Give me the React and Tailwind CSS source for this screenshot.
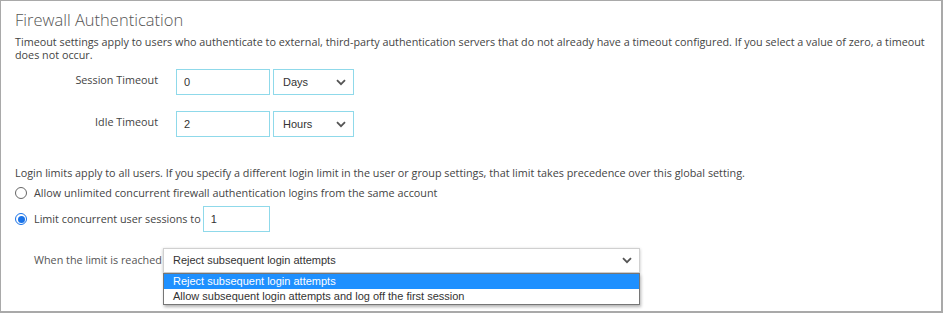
import React from 'react';

const Chevron = () => (
  <svg width="10" height="7" viewBox="0 0 10 7" className="shrink-0">
    <path d="M1 1.2 L5 5.2 L9 1.2" fill="none" stroke="#555" strokeWidth="1.8" />
  </svg>
);

const FakeSelect = ({ value, className = '' }) => (
  <div
    className={`flex items-center justify-between border border-[#8fd9ea] pl-[9px] pr-[7px] text-[11px] text-[#333] ${className}`}
    style={{ fontFamily: '"Liberation Sans", Arial, sans-serif' }}
  >
    <span>{value}</span>
    <Chevron />
  </div>
);

const TextBox = ({ value, className = '' }) => (
  <div
    className={`flex items-center border border-[#8fd9ea] pl-[7px] text-[11px] text-[#333] ${className}`}
    style={{ fontFamily: '"Liberation Sans", Arial, sans-serif' }}
  >
    {value}
  </div>
);

const TimeoutRow = ({ label, value, unit, className = '' }) => (
  <div className={`flex items-start ${className}`}>
    <div className="w-[143px] pt-[4px] text-right leading-[14px]">{label}</div>
    <TextBox value={value} className="ml-[18px] h-[26px] w-[94px]" />
    <FakeSelect value={unit} className="ml-[3px] h-[26px] w-[81px]" />
  </div>
);

const Radio = ({ checked }) => (
  <span
    className={`flex h-[12px] w-[12px] shrink-0 items-center justify-center rounded-full border ${
      checked ? 'border-[#1a73e8]' : 'border-[#666]'
    } bg-white`}
  >
    {checked && <span className="h-[7px] w-[7px] rounded-full bg-[#1a73e8]" />}
  </span>
);

export default function App() {
  return (
    <div
      className="h-[313px] w-[943px] overflow-hidden border-t border-l border-r-2 border-b-2 border-[#a9a9a9] bg-white pl-[14px] pt-[7px] text-[10.8px] text-[#444]"
      style={{ fontFamily: '"Open Sans", "Noto Sans", sans-serif' }}
    >
      <h1 className="text-[16.5px] font-light leading-[24px] text-[#555]">Firewall Authentication</h1>

      <p className="mt-[3px] w-[915px] leading-[13px]">
        Timeout settings apply to users who authenticate to external, third-party authentication servers that do not
        already have a timeout configured. If you select a value of zero, a timeout does not occur.
      </p>

      <TimeoutRow label="Session Timeout" value="0" unit="Days" className="mt-[8px]" />
      <TimeoutRow label="Idle Timeout" value="2" unit="Hours" className="mt-[16px]" />

      <p className="mt-[29px] leading-[14px]">
        Login limits apply to all users. If you specify a different login limit in the user or group settings, that
        limit takes precedence over this global setting.
      </p>

      <div className="mt-[4px] flex h-[18px] items-center">
        <Radio checked={false} />
        <span className="ml-[7px]">Allow unlimited concurrent firewall authentication logins from the same account</span>
      </div>

      <div className="mt-[4px] flex items-center">
        <Radio checked />
        <span className="ml-[7px]">Limit concurrent user sessions to</span>
        <TextBox value="1" className="ml-[2px] h-[26px] w-[67px]" />
      </div>

      <div className="mt-[16px] flex items-center pl-[19px]">
        <span className="w-[129px] whitespace-nowrap text-[#555]">When the limit is reached</span>
        <div className="relative">
          <div
            className="flex h-[25px] w-[477px] items-center justify-between border border-[#d0d0d0] pl-[9px] pr-[7px] text-[11px] text-[#333] shadow-[0_1px_3px_rgba(0,0,0,0.25)]"
            style={{ fontFamily: '"Liberation Sans", Arial, sans-serif' }}
          >
            <span>Reject subsequent login attempts</span>
            <Chevron />
          </div>
          <div
            className="absolute left-0 top-full w-[477px] border border-[#767676] bg-white pb-px text-[11px] leading-[14px] text-[#333] shadow-[1px_2px_3px_rgba(0,0,0,0.3)]"
            style={{ fontFamily: '"Liberation Sans", Arial, sans-serif' }}
          >
            <div className="bg-[#1e90ff] pl-[9px] leading-[15px] text-white">Reject subsequent login attempts</div>
            <div className="pl-[9px] leading-[14px]">Allow subsequent login attempts and log off the first session</div>
          </div>
        </div>
      </div>
    </div>
  );
}
